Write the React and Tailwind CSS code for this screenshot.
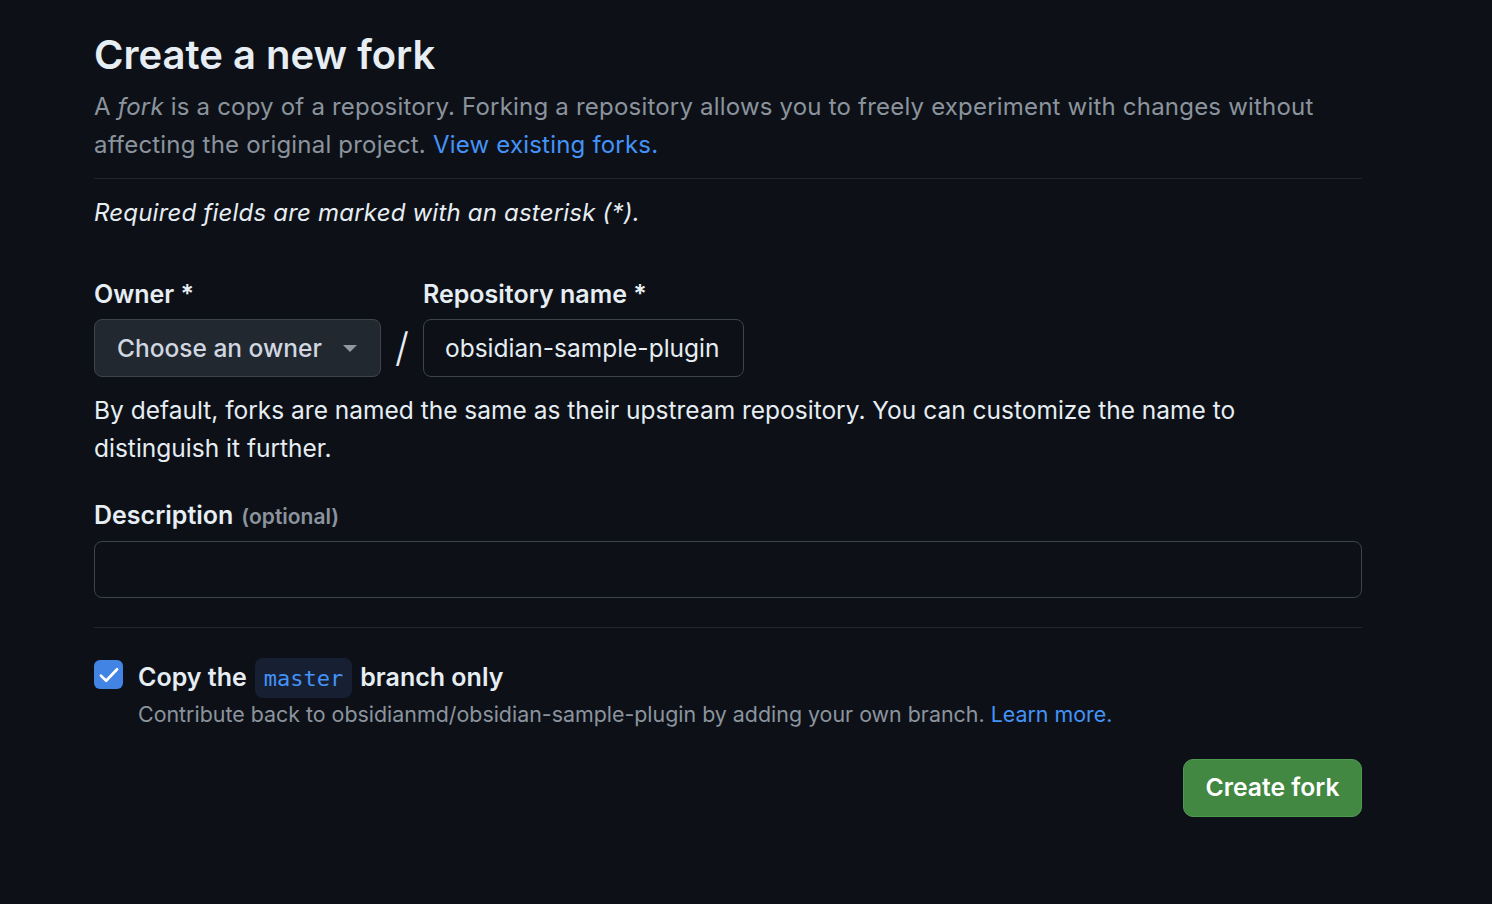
import React from 'react';

const Caret = () => (
  <svg width="16" height="10" viewBox="0 0 16 10" className="fill-[#9198a1]">
    <path d="M1 2h14L8 9z" />
  </svg>
);

const Check = () => (
  <svg width="24" height="24" viewBox="0 0 16 16" className="fill-none stroke-white">
    <path d="M2.6 8.4 6.1 11.8 13.4 4.2" strokeWidth="1.8" strokeLinecap="round" strokeLinejoin="round" />
  </svg>
);

export default function App() {
  return (
    <div className="min-h-screen bg-[#0d1117] text-[#e6edf3] font-['Inter','Noto_Sans',sans-serif]">
      <div className="ml-[94px] w-[1268px] pt-[30px]">
        <h1 className="text-[40px] leading-[50px] font-semibold">Create a new fork</h1>
        <p className="mt-[8px] text-[24px] leading-[38px] tracking-[0.2px] text-[#8b949e]">
          A <em>fork</em> is a copy of a repository. Forking a repository allows you to freely experiment with changes without
          affecting the original project. <a href="#" className="text-[#4493f8]">View existing forks.</a>
        </p>
        <div className="mt-[14px] border-t border-[#21262d]" />
        <p className="mt-[15px] text-[24px] leading-[38px] tracking-[0.2px] italic">Required fields are marked with an asterisk (*).</p>

        <div className="mt-[43px] flex items-end">
          <div className="flex flex-col">
            <label className="text-[25px] leading-[38px] font-semibold">Owner *</label>
            <button className="mt-[6px] flex h-[58px] w-[287px] items-center justify-between rounded-[8px] border border-[#3d444d] bg-[#212830] pl-[22px] pr-[22px] text-[24.5px] font-medium text-[#d1d7e0]">
              <span>Choose an owner</span>
              <Caret />
            </button>
          </div>
          <span className="flex h-[58px] w-[42px] items-center justify-center text-[40px] font-light text-[#e6edf3]">/</span>
          <div className="flex flex-col">
            <label className="text-[25px] leading-[38px] font-semibold">Repository name *</label>
            <div className="mt-[6px] flex h-[58px] w-[321px] items-center rounded-[8px] border border-[#3d444d] bg-[#0d1117] px-[21px] text-[24.5px]">
              obsidian-sample-plugin
            </div>
          </div>
        </div>
        <p className="mt-[14px] text-[24.5px] leading-[38px] text-[#e6edf3]">
          By default, forks are named the same as their upstream repository. You can customize the name to distinguish it further.
        </p>

        <div className="mt-[29px] flex items-baseline gap-[8px]">
          <span className="text-[25px] leading-[38px] font-semibold">Description</span>
          <span className="text-[21px] font-semibold text-[#8b949e]">(optional)</span>
        </div>
        <div className="mt-[7px] h-[57px] rounded-[8px] border border-[#3d444d] bg-[#0d1117]" />
        <div className="mt-[29px] border-t border-[#21262d]" />

        <div className="mt-[30px] flex items-start">
          <span className="mt-[2px] flex h-[29px] w-[29px] items-center justify-center rounded-[6px] bg-[#4184e4]">
            <Check />
          </span>
          <span className="ml-[15px] flex items-center text-[25px] font-semibold">
            Copy the
            <code className="mx-[8px] flex h-[40px] items-center rounded-[8px] bg-[#172033] px-[9px] font-['DejaVu_Sans_Mono',monospace] text-[22px] font-normal text-[#4493f8]">
              master
            </code>
            branch only
          </span>
        </div>
        <p className="ml-[44px] mt-[1px] text-[21.4px] leading-[30px] text-[#8b949e]">
          Contribute back to obsidianmd/obsidian-sample-plugin by adding your own branch.{' '}
          <a href="#" className="text-[#4493f8]">Learn more.</a>
        </p>

        <div className="mt-[30px] flex justify-end">
          <button className="h-[58px] w-[179px] rounded-[10px] border border-[#4f9a52] bg-[#428742] text-[24.7px] font-semibold text-white">
            Create fork
          </button>
        </div>
      </div>
    </div>
  );
}
